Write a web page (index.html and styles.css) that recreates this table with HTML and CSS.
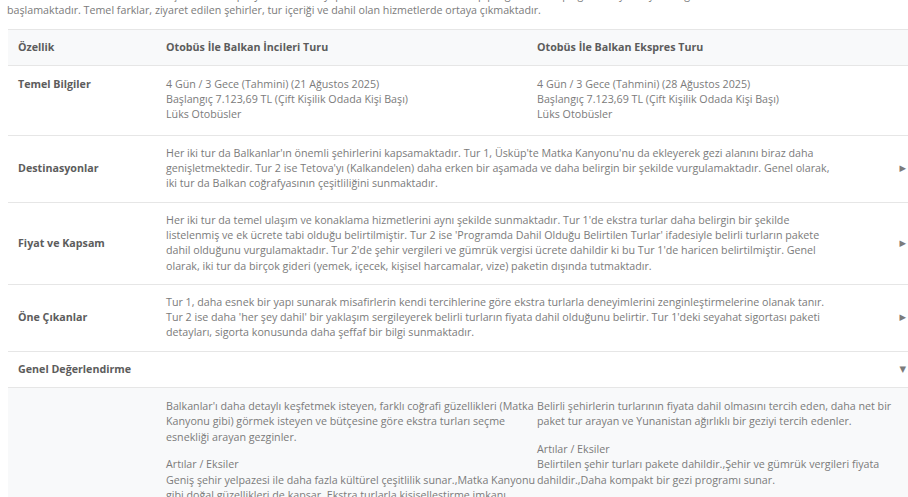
FILE: index.html
```html
<!DOCTYPE html>
<html lang="tr">
<head>
<meta charset="utf-8">
<title>Tur Karşılaştırması</title>
<link rel="stylesheet" href="styles.css">
</head>
<body>
<div class="page">
  <p class="intro">Her iki tur da Balkanlar'ın önemli şehirlerini kapsayan, otobüsle yapılan ve benzer sürelere sahip programlar olup ağustos ayında yolculuğa<br>başlamaktadır. Temel farklar, ziyaret edilen şehirler, tur içeriği ve dahil olan hizmetlerde ortaya çıkmaktadır.</p>

  <div class="table">
    <div class="row head">
      <div class="cell label">Özellik</div>
      <div class="cell">Otobüs İle Balkan İncileri Turu</div>
      <div class="cell">Otobüs İle Balkan Ekspres Turu</div>
    </div>

    <div class="row basic">
      <div class="cell label top">Temel Bilgiler</div>
      <div class="cell">4 Gün / 3 Gece (Tahmini) (21 Ağustos 2025)<br>Başlangıç 7.123,69 TL (Çift Kişilik Odada Kişi Başı)<br>Lüks Otobüsler</div>
      <div class="cell">4 Gün / 3 Gece (Tahmini) (28 Ağustos 2025)<br>Başlangıç 7.123,69 TL (Çift Kişilik Odada Kişi Başı)<br>Lüks Otobüsler</div>
    </div>

    <div class="row fold">
      <div class="cell label">Destinasyonlar</div>
      <div class="cell desc">Her iki tur da Balkanlar'ın önemli şehirlerini kapsamaktadır. Tur 1, Üsküp'te Matka Kanyonu'nu da ekleyerek gezi alanını biraz daha genişletmektedir. Tur 2 ise Tetova'yı (Kalkandelen) daha erken bir aşamada ve daha belirgin bir şekilde vurgulamaktadır. Genel olarak, iki tur da Balkan coğrafyasının çeşitliliğini sunmaktadır.</div>
      <div class="cell toggle">▶</div>
    </div>

    <div class="row fold">
      <div class="cell label">Fiyat ve Kapsam</div>
      <div class="cell desc">Her iki tur da temel ulaşım ve konaklama hizmetlerini aynı şekilde sunmaktadır. Tur 1'de ekstra turlar daha belirgin bir şekilde listelenmiş ve ek ücrete tabi olduğu belirtilmiştir. Tur 2 ise 'Programda Dahil Olduğu Belirtilen Turlar' ifadesiyle belirli turların pakete dahil olduğunu vurgulamaktadır. Tur 2'de şehir vergileri ve gümrük vergisi ücrete dahildir ki bu Tur 1'de haricen belirtilmiştir. Genel olarak, iki tur da birçok gideri (yemek, içecek, kişisel harcamalar, vize) paketin dışında tutmaktadır.</div>
      <div class="cell toggle">▶</div>
    </div>

    <div class="row fold">
      <div class="cell label">Öne Çıkanlar</div>
      <div class="cell desc">Tur 1, daha esnek bir yapı sunarak misafirlerin kendi tercihlerine göre ekstra turlarla deneyimlerini zenginleştirmelerine olanak tanır. Tur 2 ise daha 'her şey dahil' bir yaklaşım sergileyerek belirli turların fiyata dahil olduğunu belirtir. Tur 1'deki seyahat sigortası paketi detayları, sigorta konusunda daha şeffaf bir bilgi sunmaktadır.</div>
      <div class="cell toggle">▶</div>
    </div>

    <div class="row fold open">
      <div class="cell label">Genel Değerlendirme</div>
      <div class="cell desc"></div>
      <div class="cell toggle">▼</div>
    </div>

    <div class="row detail">
      <div class="cell label"></div>
      <div class="cell">
        <p>Balkanlar'ı daha detaylı keşfetmek isteyen, farklı coğrafi güzellikleri (Matka Kanyonu gibi) görmek isteyen ve bütçesine göre ekstra turları seçme esnekliği arayan gezginler.</p>
        <p>Artılar / Eksiler<br>Geniş şehir yelpazesi ile daha fazla kültürel çeşitlilik sunar.,Matka Kanyonu gibi doğal güzellikleri de kapsar.,Ekstra turlarla kişiselleştirme imkanı sunar.</p>
      </div>
      <div class="cell">
        <p>Belirli şehirlerin turlarının fiyata dahil olmasını tercih eden, daha net bir paket tur arayan ve Yunanistan ağırlıklı bir geziyi tercih edenler.</p>
        <p>Artılar / Eksiler<br>Belirtilen şehir turları pakete dahildir.,Şehir ve gümrük vergileri fiyata dahildir.,Daha kompakt bir gezi programı sunar.</p>
      </div>
    </div>
  </div>
</div>
</body>
</html>
```

FILE: styles.css
```css
html, body {
  margin: 0;
  padding: 0;
  background: #ffffff;
  overflow: hidden;
}

body {
  font-family: "Open Sans", "Noto Sans", sans-serif;
  font-size: 10.7px;
  line-height: 15.3px;
  color: #7b7b7b;
}

.page {
  padding-left: 7px;
  width: 901px;
}

.intro {
  margin: -12px 0 0 0;
  white-space: nowrap;
}

.table {
  margin-top: 10px;
  margin-left: 1px;
  border-top: 1px solid #e6e6e6;
}

.row {
  display: grid;
  grid-template-columns: 148px 371px 1fr;
  border-bottom: 1px solid #e6e6e6;
}

.cell {
  padding: 10px 4px 10px 10px;
}

.head {
  background: #f8f9fa;
  font-weight: 700;
  color: #5c5c5c;
}

.label {
  font-weight: 700;
  color: #5c5c5c;
  display: flex;
  align-items: center;
}

.label.top {
  align-items: flex-start;
}

.basic .cell {
  padding-top: 11px;
  padding-bottom: 12px;
}

.fold {
  grid-template-columns: 148px 686px 1fr;
}

.fold .desc {
  padding-right: 10px;
}

.toggle {
  display: flex;
  align-items: center;
  justify-content: flex-end;
  padding-right: 2px;
  font-family: "DejaVu Sans", sans-serif;
  font-size: 8.5px;
  color: #7b7b7b;
}

.detail {
  grid-template-columns: 148px 381px 1fr;
  background: #f8f9fa;
  border-bottom: none;
}

.detail p {
  margin: 0 0 12.5px 0;
}

.detail .cell {
  padding-top: 11px;
  padding-right: 0;
}

.detail .cell:last-child {
  padding-left: 0;
}
```
